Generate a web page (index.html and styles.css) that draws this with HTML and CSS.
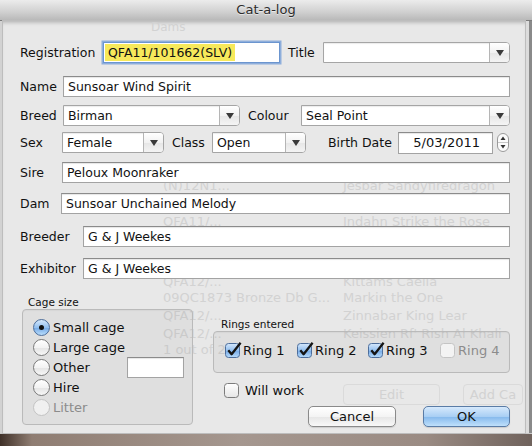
FILE: index.html
```html
<!DOCTYPE html>
<html>
<head>
<meta charset="utf-8">
<title>Cat-a-log</title>
<link rel="stylesheet" href="styles.css">
</head>
<body>
<div class="screen">
  <header class="titlebar">Cat-a-log</header>
  <div class="main">
    <div class="sheet">
      <div class="ghosts" aria-hidden="true">
        <span class="g-dams">Dams</span>
        <span class="g-c1">(N)12N1...</span><span class="g-c2">Jesbar Sandyfiredragon</span>
        <span class="g-d1">QFA11/...</span><span class="g-d2">Indahn Strike the Rose</span>
        <span class="g-e1">QFA12/...</span><span class="g-e2">Kittams Caelia</span>
        <span class="g-f1">09QC1873 Bronze Db G...</span><span class="g-f2">Markin the One</span>
        <span class="g-h1">QFA12/...</span><span class="g-h2">Zinnabar King Lear</span>
        <span class="g-i1">QFA12/...</span><span class="g-i2">Keissien Rf' Rish Al Khali</span>
        <span class="g-j1">1 out of 24</span>
        <span class="g-btn g-edit">Edit</span>
        <span class="g-btn g-add">Add Ca</span>
      </div>

      <div class="row">
        <span class="lbl w83">Registration</span>
        <div class="field focus w177"><span class="sel">QFA11/101662(SLV)</span></div>
        <span class="lbl ml8 w35">Title</span>
        <div class="combo grow"><span class="ctext"></span><span class="cbtn"><svg width="8" height="6" viewBox="0 0 8 6"><path d="M0 0H8L4 6Z" fill="#3a3a3a"/></svg></span></div>
      </div>

      <div class="row mt13">
        <span class="lbl w43">Name</span>
        <div class="field grow">Sunsoar Wind Spirit</div>
      </div>

      <div class="row mt8">
        <span class="lbl w43">Breed</span>
        <div class="combo w177"><span class="ctext">Birman</span><span class="cbtn"><svg width="8" height="6" viewBox="0 0 8 6"><path d="M0 0H8L4 6Z" fill="#3a3a3a"/></svg></span></div>
        <span class="lbl ml8 w53">Colour</span>
        <div class="combo grow"><span class="ctext">Seal Point</span><span class="cbtn"><svg width="8" height="6" viewBox="0 0 8 6"><path d="M0 0H8L4 6Z" fill="#3a3a3a"/></svg></span></div>
      </div>

      <div class="row mt6">
        <span class="lbl w42">Sex</span>
        <div class="combo w102"><span class="ctext">Female</span><span class="cbtn"><svg width="8" height="6" viewBox="0 0 8 6"><path d="M0 0H8L4 6Z" fill="#3a3a3a"/></svg></span></div>
        <span class="lbl ml8 w40">Class</span>
        <div class="combo w94"><span class="ctext">Open</span><span class="cbtn"><svg width="8" height="6" viewBox="0 0 8 6"><path d="M0 0H8L4 6Z" fill="#3a3a3a"/></svg></span></div>
        <span class="lbl ml22 w70">Birth Date</span>
        <div class="field date w95">5/03/2011</div>
        <span class="stepper"><svg width="12" height="19" viewBox="0 0 12 19"><rect x="0.5" y="0.5" width="11" height="18" rx="5.5" fill="#fbfbfb" stroke="#9a9a9a"/><line x1="1" y1="9.5" x2="11" y2="9.5" stroke="#c8c8c8"/><path d="M3.5 7H8.5L6 3.5Z" fill="#333"/><path d="M3.5 12H8.5L6 15.5Z" fill="#333"/></svg></span>
      </div>

      <div class="row mt9">
        <span class="lbl w42">Sire</span>
        <div class="field grow">Peloux Moonraker</div>
      </div>

      <div class="row mt10">
        <span class="lbl w41">Dam</span>
        <div class="field grow">Sunsoar Unchained Melody</div>
      </div>

      <div class="row mt12">
        <span class="lbl w63">Breeder</span>
        <div class="field grow">G &amp; J Weekes</div>
      </div>

      <div class="row mt11">
        <span class="lbl w63">Exhibitor</span>
        <div class="field grow">G &amp; J Weekes</div>
      </div>

      <div class="bottom">
        <div class="cage">
          <div class="gtitle">Cage size</div>
          <div class="gbox cagebox">
            <div class="radio-row"><span class="radio on"></span><span>Small cage</span></div>
            <div class="radio-row"><span class="radio"></span><span>Large cage</span></div>
            <div class="radio-row"><span class="radio"></span><span>Other</span><div class="field other"></div></div>
            <div class="radio-row"><span class="radio"></span><span>Hire</span></div>
            <div class="radio-row disabled"><span class="radio dis"></span><span>Litter</span></div>
          </div>
        </div>

        <div class="rings">
          <div class="gtitle">Rings entered</div>
          <div class="gbox ringbox">
            <div class="check"><svg class="cb" width="17" height="16" viewBox="0 0 17 16"><defs><linearGradient id="bl" x1="0" y1="0" x2="0" y2="1"><stop offset="0" stop-color="#d6e8fb"/><stop offset="0.5" stop-color="#93c0f0"/><stop offset="0.51" stop-color="#74a9e6"/><stop offset="1" stop-color="#b8dcfb"/></linearGradient></defs><rect x="0.5" y="1.5" width="14" height="14" rx="3" fill="url(#bl)" stroke="#4d6e9c"/><path d="M3.3 8.2L6.6 12.2L15.6 0.8" fill="none" stroke="#151515" stroke-width="2.3" stroke-linejoin="round"/></svg><span>Ring 1</span></div>
            <div class="check"><svg class="cb" width="17" height="16" viewBox="0 0 17 16"><rect x="0.5" y="1.5" width="14" height="14" rx="3" fill="url(#bl)" stroke="#4d6e9c"/><path d="M3.3 8.2L6.6 12.2L15.6 0.8" fill="none" stroke="#151515" stroke-width="2.3" stroke-linejoin="round"/></svg><span>Ring 2</span></div>
            <div class="check"><svg class="cb" width="17" height="16" viewBox="0 0 17 16"><rect x="0.5" y="1.5" width="14" height="14" rx="3" fill="url(#bl)" stroke="#4d6e9c"/><path d="M3.3 8.2L6.6 12.2L15.6 0.8" fill="none" stroke="#151515" stroke-width="2.3" stroke-linejoin="round"/></svg><span>Ring 3</span></div>
            <div class="check disabled"><svg class="cb" width="17" height="16" viewBox="0 0 17 16"><rect x="0.5" y="1.5" width="14" height="14" rx="3" fill="#f3f3f3" stroke="#c4c4c4"/></svg><span>Ring 4</span></div>
          </div>
          <div class="check willwork"><svg class="cb" width="17" height="16" viewBox="0 0 17 16"><defs><linearGradient id="wh" x1="0" y1="0" x2="0" y2="1"><stop offset="0" stop-color="#ffffff"/><stop offset="1" stop-color="#e6e6e6"/></linearGradient></defs><rect x="0.5" y="1.5" width="14" height="14" rx="3" fill="url(#wh)" stroke="#7c7c7c"/></svg><span>Will work</span></div>
          <div class="btns">
            <div class="btn cancel">Cancel</div>
            <div class="btn ok">OK</div>
          </div>
        </div>
      </div>
    </div>
    <div class="edge"></div>
  </div>
  <div class="desk"></div>
</div>
</body>
</html>
```

FILE: styles.css
```css
* { box-sizing: border-box; }
body {
  margin: 0;
  font-family: "DejaVu Sans", "Liberation Sans", sans-serif;
  font-size: 12.5px;
  color: #111;
}
.screen {
  width: 532px;
  height: 446px;
  display: flex;
  flex-direction: column;
  overflow: hidden;
}
.titlebar {
  flex: none;
  height: 21px;
  background: linear-gradient(#ececec, #d0d0d0 60%, #b9b9b9);
  border-bottom: 1px solid #7c7c7c;
  text-align: center;
  font-size: 13px;
  line-height: 20px;
  color: #2c2c2c;
  text-shadow: 0 1px 0 rgba(255,255,255,.55);
}
.main {
  flex: none;
  height: 412px;
  display: flex;
  background: #d2d2d2;
}
.sheet {
  width: 522px;
  margin-left: 3px;
  position: relative;
  z-index: 0;
  background: #e8e8e8;
  padding: 21px 15px 0 17px;
  box-shadow: inset 0 4px 4px -3px rgba(0,0,0,.28), 0 0 0 1px #bdbdbd;
}
.edge {
  flex: 1;
  background: linear-gradient(to right, #dcdcdc 0 4px, #8a8a8a 4px);
}
.desk {
  flex: 1;
  background: linear-gradient(to right, #3f3028, #8f7d72 6%, #a5978f 45%, #9a8b83 80%, #6f625c);
  border-top: 1px solid #c8c8c8;
}

/* ghost content of the window behind the translucent sheet */
.ghosts {
  position: absolute;
  inset: 0;
  z-index: -1;
  color: #d2d2d2;
  font-size: 13px;
  pointer-events: none;
  overflow: hidden;
}
.ghosts span { position: absolute; white-space: nowrap; line-height: 16px; }
.g-dams { left: 148px; top: -2px; font-size: 12px; }
.g-c1 { left: 160px; top: 157px; } .g-c2 { left: 340px; top: 157px; }
.g-d1 { left: 160px; top: 193px; } .g-d2 { left: 340px; top: 193px; }
.g-e1 { left: 160px; top: 253px; } .g-e2 { left: 340px; top: 253px; }
.g-f1 { left: 160px; top: 269px; } .g-f2 { left: 340px; top: 269px; }
.g-h1 { left: 160px; top: 287px; } .g-h2 { left: 340px; top: 287px; }
.g-i1 { left: 160px; top: 305px; } .g-i2 { left: 340px; top: 305px; }
.g-j1 { left: 160px; top: 321px; }
.ghosts .g-btn {
  top: 363px;
  height: 21px;
  border: 1px solid #dadada;
  border-radius: 4px;
  text-align: center;
  line-height: 19px;
}
.g-edit { left: 340px; width: 97px; }
.g-add { left: 460px; width: 60px; }

/* form rows */
.row {
  display: flex;
  align-items: center;
  height: 21px;
}
.mt6 { margin-top: 6px; }
.mt8 { margin-top: 8px; }
.mt9 { margin-top: 9px; }
.mt10 { margin-top: 10px; }
.mt11 { margin-top: 11px; }
.mt12 { margin-top: 12px; }
.mt13 { margin-top: 13px; }
.lbl { flex: none; white-space: nowrap; }
.ml8 { margin-left: 8px; }
.ml22 { margin-left: 22px; }
.w35 { width: 35px; }
.w40 { width: 40px; }
.w41 { width: 41px; }
.w42 { width: 42px; }
.w43 { width: 43px; }
.w53 { width: 53px; }
.w63 { width: 63px; }
.w70 { width: 70px; }
.w83 { width: 83px; }
.w94 { width: 94px; flex: none; }
.w95 { width: 95px; flex: none; }
.w102 { width: 102px; flex: none; }
.w177 { width: 177px; flex: none; }
.grow { flex: 1; min-width: 0; }

.field {
  height: 21px;
  background: #fff;
  border: 1px solid #a3a3a3;
  border-top-color: #8b8b8b;
  box-shadow: inset 0 1px 1px rgba(0,0,0,.1);
  padding: 0 4px;
  line-height: 19px;
  white-space: nowrap;
  overflow: hidden;
}
.field.focus {
  border-color: #6b95cf;
  box-shadow: 0 0 0 1.5px rgba(112,155,215,.75);
  padding-left: 1px;
}
.sel { background: #f7e95b; padding: 1px 3px; }
.field.date {
  height: 22px;
  text-align: right;
  padding-right: 12px;
  font-size: 13px;
  line-height: 20px;
}
.stepper {
  flex: none;
  margin-left: 4px;
  width: 12px;
  height: 19px;
  display: flex;
}

.combo {
  height: 21px;
  display: flex;
  background: #fff;
  border: 1px solid #a5a5a5;
  border-radius: 0 4px 4px 0;
  box-shadow: inset 0 1px 1px rgba(0,0,0,.08);
}
.ctext {
  flex: 1;
  min-width: 0;
  padding: 0 4px;
  line-height: 19px;
  white-space: nowrap;
  overflow: hidden;
}
.cbtn {
  flex: none;
  width: 20px;
  border-left: 1px solid #b5b5b5;
  border-radius: 0 3px 3px 0;
  background: linear-gradient(#ffffff, #f2f2f2 50%, #e6e6e6 51%, #f4f4f4);
  display: flex;
  align-items: center;
  justify-content: center;
}

/* bottom area */
.bottom {
  display: flex;
  align-items: flex-start;
  margin-top: 17px;
}
.gtitle {
  font-size: 10.5px;
  line-height: 13px;
  height: 13px;
  padding-left: 6px;
  color: #111;
}
.gbox {
  border: 1px solid #bababa;
  border-radius: 4px;
  background: rgba(0,0,0,.035);
  box-shadow: inset 0 1px 1px rgba(0,0,0,.04);
}
.cage { margin-left: 2px; width: 171px; flex: none; }
.cagebox { height: 116px; padding: 7px 8px 0 10px; }
.radio-row {
  display: flex;
  align-items: center;
  height: 20px;
  gap: 3px;
  font-size: 13px;
}
.radio {
  flex: none;
  width: 17px;
  height: 17px;
  border-radius: 50%;
  border: 1px solid #7a7a7a;
  background: linear-gradient(#ffffff, #f3f3f3 50%, #e4e4e4 51%, #f7f7f7);
  display: flex;
  align-items: center;
  justify-content: center;
}
.radio.on {
  border-color: #4c6d9a;
  background: linear-gradient(#d5e8fb, #93c0f0 50%, #74a9e6 51%, #b8dcfb);
}
.radio.on::after {
  content: "";
  width: 5px;
  height: 5px;
  border-radius: 50%;
  background: #111;
}
.radio.dis { border-color: #c3c3c3; background: #f0f0f0; }
.disabled { color: #8c8c8c; }
.field.other { margin-left: auto; width: 57px; flex: none; }

.rings { margin-left: 20px; width: 297px; flex: none; }
.rings .gtitle { margin-top: 22px; padding-left: 8px; }
.ringbox {
  height: 42px;
  padding: 10px 0 0 11px;
  display: grid;
  grid-template-columns: 72px 71px 72px auto;
  align-items: start;
}
.check {
  display: flex;
  align-items: center;
  gap: 1px;
  height: 16px;
  font-size: 13px;
  white-space: nowrap;
}
.cb { flex: none; display: block; }
.willwork { margin: 9px 0 0 11px; gap: 4px; }
.btns {
  display: flex;
  justify-content: flex-end;
  gap: 27px;
  margin-top: 8px;
}
.btn {
  height: 21px;
  border-radius: 5px;
  border: 1px solid #8a8a8a;
  background: linear-gradient(#ffffff, #f4f4f4 50%, #e6e6e6 51%, #f8f8f8);
  font-size: 13px;
  line-height: 19px;
  text-align: center;
  box-shadow: 0 1px 1px rgba(0,0,0,.12);
}
.cancel { width: 88px; }
.ok {
  width: 87px;
  border-color: #5a7ca6;
  background: linear-gradient(#d6e9fc, #a9cff4 50%, #84b8ec 51%, #bfe0fb);
}
```
